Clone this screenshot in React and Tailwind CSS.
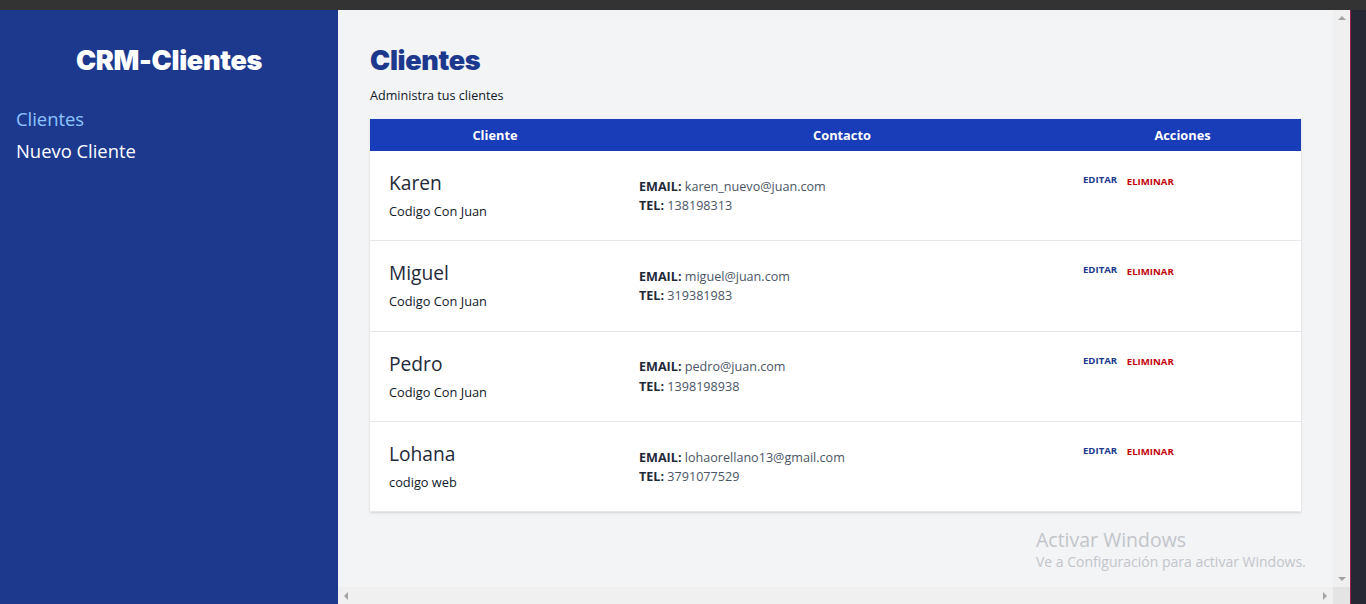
import React from "react";

const clientes = [
  { nombre: "Karen", empresa: "Codigo Con Juan", email: "karen_nuevo@juan.com", telefono: "138198313" },
  { nombre: "Miguel", empresa: "Codigo Con Juan", email: "miguel@juan.com", telefono: "319381983" },
  { nombre: "Pedro", empresa: "Codigo Con Juan", email: "pedro@juan.com", telefono: "1398198938" },
  { nombre: "Lohana", empresa: "codigo web", email: "lohaorellano13@gmail.com", telefono: "3791077529" },
];

const Cliente = ({ cliente }) => {
  return (
    <tr className="border-b border-gray-200">
      <td className="px-[19px] py-[19px] align-top">
        <p className="text-[19.2px] leading-[25.6px] text-gray-800">{cliente.nombre}</p>
        <p className="mt-[6.4px] text-[12.8px] leading-[19.2px] text-gray-900">{cliente.empresa}</p>
      </td>
      <td className="px-[19px] pt-[1px] align-middle">
        <p className="text-[12.6px] leading-[19.2px] text-gray-600">
          <span className="font-bold uppercase text-gray-800">Email: </span>
          {cliente.email}
        </p>
        <p className="text-[12.6px] leading-[19.2px] text-gray-600">
          <span className="font-bold uppercase text-gray-800">Tel: </span>
          {cliente.telefono}
        </p>
      </td>
      <td className="px-[19px] pt-[23px] align-top">
        <div className="flex items-start gap-[9.6px]">
          <button className="text-[9.6px] leading-[12.8px] font-bold uppercase text-blue-900">
            Editar
          </button>
          <button className="mt-[1.5px] text-[9.6px] leading-[12.8px] font-bold uppercase text-red-700">
            Eliminar
          </button>
        </div>
      </td>
    </tr>
  );
};

export default function App() {
  return (
    <div
      className="flex h-[604px] w-[1366px] flex-col overflow-hidden bg-[#262833]"
      style={{ fontFamily: '"Open Sans", "Noto Sans", sans-serif' }}
    >
      <div className="h-[10px] shrink-0 bg-[#333333]" />

      <div className="flex min-h-0 flex-1">
        <aside className="w-[338px] shrink-0 bg-blue-900 px-4 pt-[34px]">
          <h2
            className="text-center text-[27px] leading-[34px] font-black tracking-[-0.3px] text-white"
            style={{ fontFamily: "Inter, sans-serif" }}
          >
            CRM-Clientes
          </h2>
          <nav className="mt-[28px]">
            <a className="mt-[6.4px] block text-[18.4px] leading-[25.6px] text-blue-300">Clientes</a>
            <a className="mt-[6.4px] block text-[18.4px] leading-[25.6px] text-white">Nuevo Cliente</a>
          </nav>
        </aside>

        <div className="flex w-[1012px] shrink-0 flex-col">
          <div className="flex min-h-0 flex-1">
            <main className="relative flex-1 bg-gray-100 px-8 pt-[34px]">
              <h1
                className="text-[27px] leading-[34px] font-black tracking-[-0.3px] text-blue-900"
                style={{ fontFamily: "Inter, sans-serif" }}
              >
                Clientes
              </h1>
              <p className="mt-[8px] text-[12.6px] leading-[19.2px] text-gray-900">
                Administra tus clientes
              </p>

              <table className="mt-[14px] w-full table-fixed bg-white shadow">
                <colgroup>
                  <col className="w-[250px]" />
                  <col className="w-[444px]" />
                  <col className="w-[237px]" />
                </colgroup>
                <thead className="bg-blue-800 text-white">
                  <tr>
                    <th className="p-[6.4px] text-[12.8px] leading-[19.2px] font-bold">Cliente</th>
                    <th className="p-[6.4px] text-[12.8px] leading-[19.2px] font-bold">Contacto</th>
                    <th className="p-[6.4px] text-[12.8px] leading-[19.2px] font-bold">Acciones</th>
                  </tr>
                </thead>
                <tbody>
                  {clientes.map((cliente) => (
                    <Cliente key={cliente.nombre} cliente={cliente} />
                  ))}
                </tbody>
              </table>

              {/* marca de agua de windows */}
              <div className="pointer-events-none absolute left-[698px] top-[517px] text-[#c2c5ca]">
                <p className="text-[19.5px] leading-[26px]">Activar Windows</p>
                <p className="text-[14px] leading-[18px]">Ve a Configuración para activar Windows.</p>
              </div>
            </main>

            <div className="flex w-[17px] flex-col items-center justify-between bg-[#f0f0f0] py-[6px]">
              <span className="h-0 w-0 border-x-[4px] border-b-[4px] border-x-transparent border-b-[#a3a3a3]" />
              <span className="h-0 w-0 border-x-[4px] border-t-[4px] border-x-transparent border-t-[#a3a3a3]" />
            </div>
          </div>

          <div className="flex h-[17px] shrink-0">
            <div className="flex flex-1 items-center justify-between bg-[#f0f0f0] px-[6px]">
              <span className="h-0 w-0 border-y-[4px] border-r-[4px] border-y-transparent border-r-[#a3a3a3]" />
              <span className="h-0 w-0 border-y-[4px] border-l-[4px] border-y-transparent border-l-[#a3a3a3]" />
            </div>
            <div className="w-[17px] bg-[#e4e4e4]" />
          </div>
        </div>

        <div className="w-px shrink-0 bg-[#9c1f4e]" />
        <div className="flex-1 bg-[#262833]" />
      </div>
    </div>
  );
}
